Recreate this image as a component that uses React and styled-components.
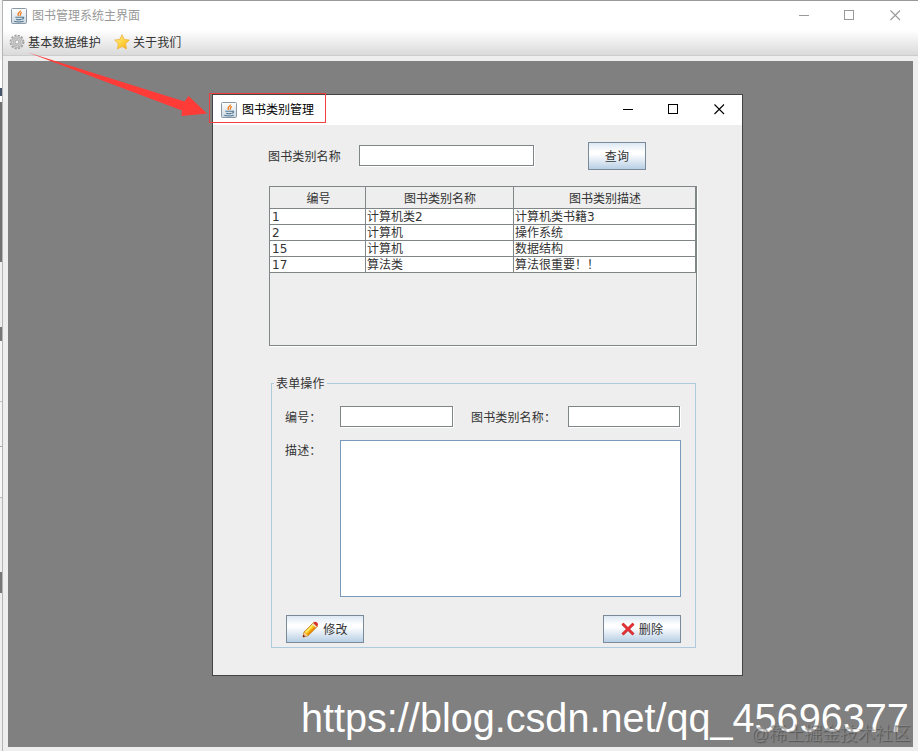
import styled, { createGlobalStyle } from "styled-components";

const GlobalStyle = createGlobalStyle`
	* {
		box-sizing: border-box;
	}

	body {
		margin: 0;
		overflow: hidden;
		color: #333;
		font-family: "DejaVu Sans", "Noto Sans CJK SC", sans-serif;
		font-size: 12px;
		line-height: 16px;
	}
`;

const columns = ["编号", "图书类别名称", "图书类别描述"];

const rows = [
	["1", "计算机类2", "计算机类书籍3"],
	["2", "计算机", "操作系统"],
	["15", "计算机", "数据结构"],
	["17", "算法类", "算法很重要！！"],
];

// icons
const JavaIcon = () => (
	<svg width="16" height="16" viewBox="0 0 16 16">
		<defs>
			<linearGradient id="java" x1="0" y1="0" x2="0" y2="1">
				<stop offset="0" stopColor="#fff" />
				<stop offset="1" stopColor="#c9d6df" />
			</linearGradient>
		</defs>
		<rect x=".5" y=".5" width="15" height="15" rx="1" fill="url(#java)" stroke="#8a98a5" />
		<path d="M9.700 2.500C9.500 4.500 5.500 5 7.500 8M10.800 4.300C8.500 5.300 10.300 6.500 8.800 7.800" fill="none" stroke="#ed8127" strokeWidth="1.300" />
		<path d="M4.300 9.300h6.700M5.200 11.200c1.500.6 4 .5 5.300 0M3.300 13.200c2.500.8 6.700.8 9.300 0M10.800 9.300c2.500-.8 2.500 1.400.2 1.900" fill="none" stroke="#507692" strokeWidth="1.100" />
	</svg>
);

const GearIcon = () => (
	<svg width="16" height="16" viewBox="0 0 16 16">
		<circle cx="8" cy="8" r="6.500" fill="none" stroke="#a2a2a2" strokeWidth="1.800" strokeDasharray="2.100 1.303" />
		<circle cx="8" cy="8" r="4.600" fill="#cfcfcf" stroke="#acacac" strokeWidth="2.400" />
		<circle cx="8" cy="8" r="4.500" fill="none" stroke="#d2d2d2" strokeWidth="1.200" />
		<circle cx="8" cy="8" r="2" fill="#f5f5f5" stroke="#a0a0a0" strokeWidth=".9" />
	</svg>
);

const StarIcon = () => (
	<svg width="16" height="16" viewBox="0 0 16 16">
		<defs>
			<linearGradient id="star" x1="0" y1="0" x2="1" y2="1">
				<stop offset="0" stopColor="#fff09a" />
				<stop offset=".55" stopColor="#ffd23c" />
				<stop offset="1" stopColor="#f8a51c" />
			</linearGradient>
		</defs>
		<path d="M8 .7l2.200 4.700 5.200.7-3.800 3.600.9 5.200L8 12.500l-4.600 2.400.9-5.200L.6 6.100l5.200-.7z" fill="url(#star)" stroke="#eeb13c" strokeWidth=".8" strokeLinejoin="round" />
	</svg>
);

const PencilIcon = () => (
	<svg width="17" height="17" viewBox="0 0 17 17">
		<path d="M1 16l1.100-5L11.700 1.400l3.900 3.800L5.900 14.800z" fill="#f9ba13" stroke="#b96a0c" strokeWidth=".8" />
		<path d="M3.700 11.300L12.300 2.700" stroke="#ffec68" strokeWidth="1.700" />
		<path d="M5.800 13.600l8.500-8.500" stroke="#e88208" strokeWidth="1.300" />
		<path d="M1 16l1.100-4.800 3.600 3.500z" fill="#f3c99a" />
		<path d="M.8 16.200l.6-2.600 1.900 1.900z" fill="#7a1612" />
		<path d="M11.200 2.200l1-1c1.600-1.400 4.700 1.400 3.500 3.200l-1 1.200z" fill="#d83129" />
		<path d="M10.600 2.700l3.800 3.600" stroke="#e5e0d8" strokeWidth="1.300" />
	</svg>
);

const CrossIcon = () => (
	<svg width="14" height="14" viewBox="0 0 14 14">
		<path d="M1.500 1.700l11 10.800M12.500 1.700l-11 10.800" stroke="#c3353a" strokeWidth="3" />
		<path d="M1.500 1.500l10.800 10.600M12.300 1.500L1.500 12.100" stroke="#e63036" strokeWidth="1.900" />
	</svg>
);

const WindowControls = ({ color }) => (
	<svg width="103" height="12" viewBox="0 0 103 12" fill="none" stroke={color} shapeRendering="crispEdges">
		<path d="M0 5.500h10" />
		<rect x="45.500" y=".5" width="9" height="9" />
		<path d="M91.500 .5l9.500 9.500M101 .5L91.500 10" shapeRendering="auto" strokeWidth="1.100" />
	</svg>
);

// main window
const Screen = styled.div`
	position: relative;
	display: flex;
	width: 918px;
	height: 751px;
	overflow: hidden;
	background: #eee;
`;

// strip of the page that is visible behind the window
const Behind = styled.div`
	flex: none;
	width: 3px;
	border-right: 1px solid #b4b4b4;
	background: linear-gradient(
		#f4f4f4 0 60px,
		#fff 60px 88px,
		#46546e 88px 96px,
		#fff 96px 102px,
		#717171 102px 262px,
		#eee 262px 327px,
		#777 327px 341px,
		#f4f4f4 341px 401px,
		#bbb 401px 402px,
		#f4f4f4 402px 446px,
		#aaa 446px 447px,
		#f8f8f8 447px 497px,
		#bbb 497px 498px,
		#eee 498px 572px,
		#777 572px 593px,
		#eee 593px
	);
`;

const MainWindow = styled.div`
	display: flex;
	flex: 1;
	flex-direction: column;
	border-top: 1px solid #999;
`;

const TitleBar = styled.div`
	display: flex;
	flex: none;
	align-items: center;
	height: ${({ $height }) => $height}px;
	padding: 0 16px 0 8px;
	background: #fff;
	color: ${({ $active }) => ($active ? "#000" : "#999")};
`;

const TitleText = styled.span`
	flex: 1;
	margin-left: 5px;
`;

const MenuBar = styled.div`
	display: flex;
	align-items: center;
	height: 26px;
	padding: 0 0 1px 6px;
	border-bottom: 1px solid #ccc;
	background: linear-gradient(#fff, #dadada);
`;

const MenuItem = styled.div`
	display: flex;
	align-items: center;
	gap: 3px;
	margin-right: 13px;
`;

// text beside an icon, one pixel under its middle
const Caption = styled.span`
	padding-top: 2px;
	letter-spacing: 0.15px;
`;

const Desktop = styled.div`
	position: relative;
	flex: 1;
	margin: 5px 5px 4px;
	background: #808080;
`;

// inner window
const Dialog = styled.div`
	position: absolute;
	top: 33px;
	left: 204px;
	width: 531px;
	height: 582px;
	border: 1px solid #444;
	background: #eee;
`;

const DialogBody = styled.div`
	padding: 17px 45px 0 55px;
`;

const SearchRow = styled.div`
	display: flex;
	align-items: center;
	height: 28px;

	& > input {
		margin-bottom: 1px;
	}

	& > button {
		margin-left: 54px;
	}
`;

const Label = styled.label`
	flex: none;
	width: ${({ $width }) => $width}px;
	padding-top: 2px;
	letter-spacing: 0.15px;
	white-space: nowrap;
`;

const Input = styled.input`
	width: ${({ $width }) => $width}px;
	height: 21px;
	padding: 0 3px;
	border: 1px solid #808587;
	border-radius: 0;
	outline: none;
	background: #fff;
	box-shadow: 1px 1px 0 #fff;
`;

const Button = styled.button`
	display: flex;
	align-items: center;
	justify-content: center;
	gap: 4px;
	width: ${({ $width }) => $width}px;
	height: 28px;
	padding: 0;
	border: 1px solid #7a8a99;
	background: linear-gradient(#dde8f3, #fff 34%, #fff 42%, #b8cfe5);
	color: #333;
	font: inherit;
`;

const ScrollPane = styled.div`
	width: 428px;
	height: 160px;
	margin: 16px 0 0 1px;
	border: 1px solid #808587;
	box-shadow: 1px 1px 0 #fff;
`;

const TableRow = styled.div`
	display: grid;
	grid-template-columns: 96px 148px 182px;
	grid-template-rows: 100%;
	height: ${({ $header }) => ($header ? 22 : 16)}px;
	background: ${({ $header }) => ($header ? "#eee" : "#fff")};
	text-align: ${({ $header }) => ($header ? "center" : "left")};
	line-height: ${({ $header }) => ($header ? 24 : 16)}px;

	& > div {
		padding-left: 1px;
		border-right: 1px solid #808587;
		border-bottom: 1px solid #808587;
		white-space: nowrap;
	}

	& > div:first-child {
		padding-left: 2px;
	}
`;

const Fieldset = styled.fieldset`
	width: 425px;
	height: 273px;
	margin: 29px 0 0 3px;
	padding: 15px 14px 0 13px;
	border: 1px solid #accbdf;
`;

const Legend = styled.legend`
	height: 16px;
	margin-left: -11px;
	padding: 0 2px;
	line-height: 18px;
	letter-spacing: 0.15px;
`;

const FormRow = styled.div`
	display: flex;
	align-items: ${({ $top }) => ($top ? "flex-start" : "center")};
	margin-bottom: ${({ $gap }) => $gap}px;

	& > label {
		padding-top: ${({ $top }) => ($top ? 3 : 2)}px;
	}

	& > input + label {
		margin-left: 18px;
	}
`;

const Textarea = styled.textarea`
	display: block;
	width: 341px;
	height: 157px;
	border: 1px solid #7a9abb;
	border-radius: 0;
	outline: none;
	resize: none;
	background: #fff;
`;

const Actions = styled.div`
	display: flex;
	justify-content: space-between;
	padding-left: 1px;
`;

// marks drawn over the windows
const Overlay = styled.svg`
	position: absolute;
	top: 0;
	left: 0;
	pointer-events: none;
`;

const BlogUrl = styled.div`
	position: absolute;
	top: 694px;
	left: 301px;
	color: #fff;
	font-family: "Liberation Sans", sans-serif;
	font-size: 41px;
	line-height: 48px;
	white-space: nowrap;
	transform: scaleX(0.966);
	transform-origin: left;
`;

const Community = styled.div`
	position: absolute;
	top: 722px;
	left: 751px;
	color: rgba(145, 145, 145, 0.6);
	font-family: "Liberation Sans", "Noto Sans CJK SC", sans-serif;
	font-size: 17.700px;
	line-height: 24px;
	white-space: nowrap;
	text-shadow: 1px 1px 1px rgba(50, 50, 50, 0.55);
`;

const CategoryDialog = () => (
	<Dialog>
		<TitleBar $height={30} $active>
			<JavaIcon />
			<TitleText>图书类别管理</TitleText>
			<WindowControls color="#000" />
		</TitleBar>
		<DialogBody>
			<SearchRow>
				<Label $width={91}>图书类别名称</Label>
				<Input $width={175} />
				<Button $width={58}>
					<Caption>查询</Caption>
				</Button>
			</SearchRow>
			<ScrollPane>
				<TableRow $header>
					{columns.map((title) => (
						<div key={title}>{title}</div>
					))}
				</TableRow>
				{rows.map((row) => (
					<TableRow key={row[0]}>
						{row.map((cell, index) => (
							<div key={index}>{cell}</div>
						))}
					</TableRow>
				))}
			</ScrollPane>
			<Fieldset>
				<Legend>表单操作</Legend>
				<FormRow $gap={13}>
					<Label $width={55}>编号：</Label>
					<Input $width={113} />
					<Label $width={97}>图书类别名称：</Label>
					<Input $width={112} />
				</FormRow>
				<FormRow $gap={18} $top>
					<Label $width={55}>描述：</Label>
					<Textarea />
				</FormRow>
				<Actions>
					<Button $width={78}>
						<PencilIcon />
						<Caption>修改</Caption>
					</Button>
					<Button $width={78}>
						<CrossIcon />
						<Caption>删除</Caption>
					</Button>
				</Actions>
			</Fieldset>
		</DialogBody>
	</Dialog>
);

const App = () => (
	<Screen>
		<GlobalStyle />
		<Behind />
		<MainWindow>
			<TitleBar $height={29}>
				<JavaIcon />
				<TitleText>图书管理系统主界面</TitleText>
				<WindowControls color="#999" />
			</TitleBar>
			<MenuBar>
				<MenuItem>
					<GearIcon />
					<Caption>基本数据维护</Caption>
				</MenuItem>
				<MenuItem>
					<StarIcon />
					<Caption>关于我们</Caption>
				</MenuItem>
			</MenuBar>
			<Desktop>
				<CategoryDialog />
			</Desktop>
		</MainWindow>
		<BlogUrl>https://blog.csdn.net/qq_45696377</BlogUrl>
		<Community>@稀土掘金技术社区</Community>
		<Overlay width="918" height="751">
			<path d="M28 52.500L184.500 101.500L188.500 96L207 113.500L181.500 116L182 110.500Z" fill="#ff3b38" />
			<rect x="209.500" y="93.500" width="116" height="29" fill="none" stroke="#f0403b" />
		</Overlay>
	</Screen>
);

export default App;
